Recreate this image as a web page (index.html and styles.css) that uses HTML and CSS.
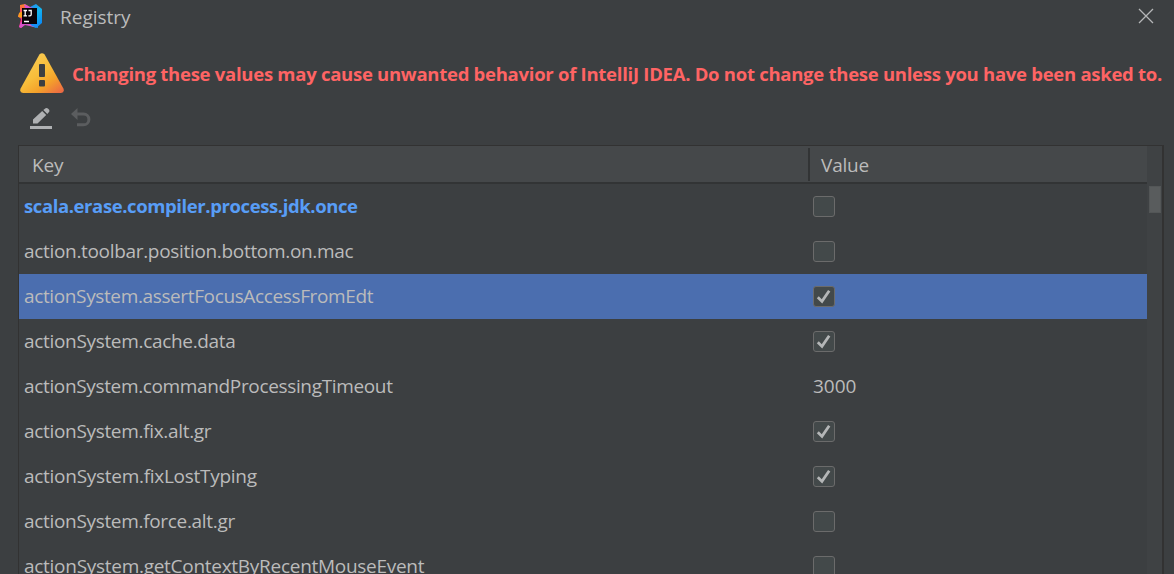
FILE: index.html
```html
<!DOCTYPE html>
<html lang="en">
<head>
<meta charset="utf-8">
<title>Registry</title>
<link rel="stylesheet" href="styles.css">
</head>
<body>
<svg width="0" height="0" class="defs">
  <symbol id="check" viewBox="0 0 22 22"><path d="M4.800 11.200 9 15.400 16.200 4.800" fill="none" stroke="#b4b6b7" stroke-width="2.8"/></symbol>
</svg>
<main class="dialog">
  <header class="titlebar">
    <svg class="logo" width="26" height="26" viewBox="0 0 26 26">
      <defs>
        <linearGradient id="blue" x1="0" y1="0" x2="1" y2="1"><stop offset="0" stop-color="#2b7cf0"/><stop offset=".55" stop-color="#12b5ee"/><stop offset="1" stop-color="#087cfa"/></linearGradient>
        <linearGradient id="hot" x1="0" y1="0" x2="0" y2="1"><stop offset="0" stop-color="#fb8a24"/><stop offset=".45" stop-color="#fe3189"/><stop offset="1" stop-color="#ff2f7d"/></linearGradient>
      </defs>
      <path d="M13 4 19 1 25 6 25 20 19 25 9 21Z" fill="url(#blue)"/>
      <path d="M3 2 8 1 13 4 15 8 7 22 4 25 2 24 4 16 1 13 3 9Z" fill="url(#hot)"/>
      <path d="M2 10 6 8 6 15 1 14Z" fill="#f9a01b"/>
      <path d="M7 1 13 4 16 5 9 7Z" fill="#d64fd8"/>
      <path d="M4 19 9 20 20 21 17 24 8 22 4 25 2 24Z" fill="#d653c7"/>
      <path d="M13 21 21 20 21 25 15 23Z" fill="#178ff5"/>
      <path d="M5 5h15v16H5Z" fill="#090309"/>
      <path d="M6.500 7.500h3.500M8.200 7.500v5.500M6.500 12.800h3.500M11.500 7.500h2.700v4q0 1.300-1.300 1.300h-1.500M7 18.500h5" fill="none" stroke="#fff" stroke-width="1.3"/>
    </svg>
    <h1 class="title">Registry</h1>
    <svg class="close" width="16" height="16" viewBox="0 0 16 16"><path d="M1 1 15 15M15 1 1 15" stroke="#b5b7b8" stroke-width="1.3"/></svg>
  </header>
  <section class="warning">
    <svg width="44" height="40" viewBox="0 0 44 40">
      <defs><linearGradient id="amber" x1=".25" y1=".2" x2=".9" y2="1"><stop offset="0" stop-color="#f9c84d"/><stop offset=".35" stop-color="#f7bd3a"/><stop offset=".65" stop-color="#f4a22a"/><stop offset="1" stop-color="#ec6b43"/></linearGradient></defs>
      <path d="M19.4 1.6Q22-1.2 24.6 1.6L43.4 35.6Q44.8 39.6 41 40H3Q-.8 39.6.6 35.6Z" fill="url(#amber)"/>
      <rect x="19" y="11" width="6" height="13" rx="1" fill="#3c3f41"/><rect x="19" y="27" width="6" height="6.500" rx="1" fill="#3c3f41"/>
    </svg>
    <p class="warning-text">Changing these values may cause unwanted behavior of IntelliJ IDEA. Do not change these unless you have been asked to.</p>
  </section>
  <nav class="toolbar">
    <svg width="22" height="22" viewBox="0 0 22 22" fill="#afb1b3"><path d="M0 18h22v3H0ZM3 11.400 12.200 3 16.200 7 7.500 15.500H3ZM13.300 2 15.600.2Q17 -.4 18.200.8 20 2.400 19.200 3.700L17.300 5.900Z"/></svg>
    <svg width="20" height="19" viewBox="0 0 20 19"><path d="M5 6H12.500A5.300 5.300 0 0 1 12.500 16.800H6" fill="none" stroke="#5b5d5f" stroke-width="3"/><path d="M0 6 6.500 0V12Z" fill="#5b5d5f"/></svg>
  </nav>
  <section class="table">
    <div class="grid">
      <div class="head"><span class="head-key">Key</span><span class="head-value">Value</span></div>
      <div class="row modified"><span class="key">scala.erase.compiler.process.jdk.once</span><i class="box"></i></div>
      <div class="row"><span class="key">action.toolbar.position.bottom.on.mac</span><i class="box"></i></div>
      <div class="row selected"><span class="key k-focus">actionSystem.assertFocusAccessFromEdt</span><i class="box"><svg><use href="#check"/></svg></i></div>
      <div class="row"><span class="key">actionSystem.cache.data</span><i class="box"><svg><use href="#check"/></svg></i></div>
      <div class="row"><span class="key k-timeout">actionSystem.commandProcessingTimeout</span><span class="number">3000</span></div>
      <div class="row"><span class="key">actionSystem.fix.alt.gr</span><i class="box"><svg><use href="#check"/></svg></i></div>
      <div class="row"><span class="key k-loose">actionSystem.fixLostTyping</span><i class="box"><svg><use href="#check"/></svg></i></div>
      <div class="row"><span class="key">actionSystem.force.alt.gr</span><i class="box"></i></div>
      <div class="row"><span class="key k-loose">actionSystem.getContextByRecentMouseEvent</span><i class="box"></i></div>
    </div>
    <div class="scrollbar"><div class="thumb"></div></div>
  </section>
</main>
</body>
</html>
```
FILE: styles.css
```css
* { box-sizing: border-box; }
body { margin: 0; background: #3c3f41; color: #bbbbbb; font: 19px/24px "Open Sans", "Noto Sans", sans-serif; overflow: hidden; }
.defs { display: block; height: 0; }
.dialog { width: 1174px; height: 574px; overflow: hidden; display: flex; flex-direction: column; }
.titlebar { height: 53px; flex: none; display: flex; align-items: flex-start; padding: 3px 20px 0 17px; }
.title { margin: 2px auto 0 17px; font-size: 19px; font-weight: 400; }
.close { margin-top: 5px; }
.warning { height: 41px; flex: none; display: flex; padding-left: 20px; }
.warning svg { flex: none; }
.warning-text { margin: 9px 0 0 8px; font-size: 18.5px; font-weight: 700; letter-spacing: -.27px; color: #ff6464; white-space: nowrap; }
.toolbar { height: 51px; flex: none; display: flex; gap: 19px; padding: 14px 0 0 30px; }
.table { height: 460px; flex: none; margin: 0 10px 0 18px; border: 1px solid #323232; border-right: 2px solid #323232; display: flex; }
.grid { width: 1128px; flex: none; }
.head { height: 38px; background: #45484a; border-bottom: 2px solid #323435; display: grid; grid-template-columns: 789px 1fr; padding-top: 2px; letter-spacing: -.2px; }
.head-key { padding: 5px 0 0 13px; }
.head-value { height: 33px; border-left: 2px solid #323435; padding: 5px 0 0 11px; }
.row { height: 45px; display: grid; grid-template-columns: 794px 1fr; align-items: center; }
.key { padding: 0 0 2px 5px; white-space: nowrap; letter-spacing: -.32px; }
.number { padding-bottom: 2px; }
.k-focus { letter-spacing: -.37px; }
.k-timeout { letter-spacing: -.35px; }
.k-loose { letter-spacing: -.28px; }
.modified { color: #589df6; font-weight: 700; }
.modified .key { font-size: 18.5px; letter-spacing: -.4px; }
.selected { background: #4b6eaf; }
.box { display: block; width: 22px; height: 21px; border: 1px solid #6b6b6b; border-radius: 3px; background: #43494a; }
.box svg { display: block; width: 22px; height: 22px; margin: -1px; }
.scrollbar { flex: 1; background: #3f4244; padding: 40px 1px 0 2px; }
.thumb { height: 27px; background: #595c5d; border: 1px solid #535657; }
```
